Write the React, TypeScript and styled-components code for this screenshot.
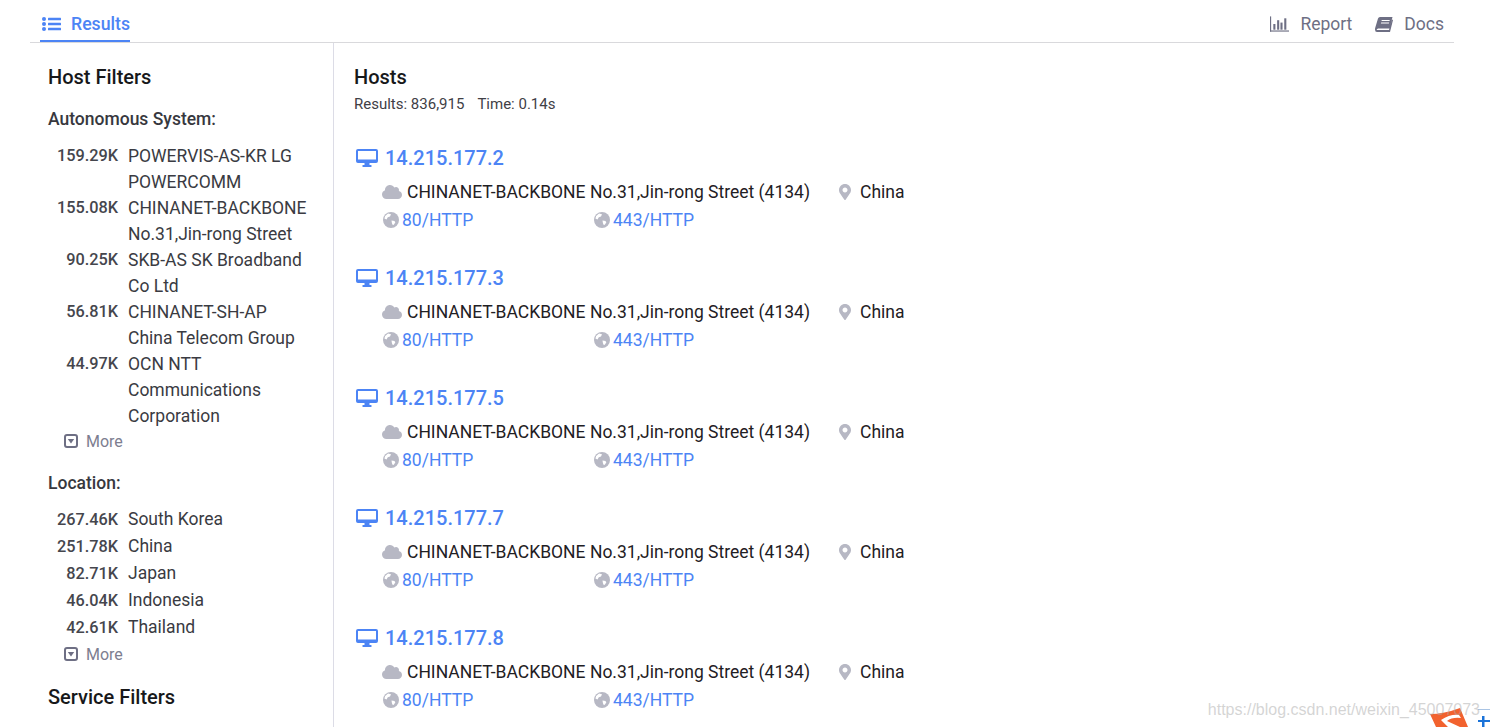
import React from "react";
import styled, { createGlobalStyle } from "styled-components";
import { FaCloud, FaMapMarkerAlt } from "react-icons/fa";

const GlobalStyle = createGlobalStyle`
  html, body {
    margin: 0;
    padding: 0;
    height: 100%;
    overflow: hidden;
    background: #fff;
    font-family: Roboto, "Liberation Sans", sans-serif;
    color: #1b1c1d;
  }
`;

const Page = styled.div`
  height: 727px;
  padding: 0 36px 0 30px;
  position: relative;
  overflow: hidden;
`;

const Nav = styled.nav`
  height: 42px;
  display: flex;
  justify-content: space-between;
  border-bottom: 1px solid #d9d9dc;
  box-sizing: content-box;
`;

const ActiveTab = styled.a`
  display: flex;
  align-items: center;
  gap: 10px;
  height: 42px;
  margin-left: 10px;
  padding: 7px 0 0 2px;
  box-sizing: border-box;
  border-bottom: 2px solid #4c84f5;
  color: #4c84f5;
  font-size: 17.7px;
  font-weight: 500;
`;

const NavRight = styled.div`
  display: flex;
  gap: 23px;
  padding-right: 10px;
`;

const NavLink = styled.a`
  display: flex;
  align-items: center;
  gap: 11px;
  height: 48px;
  font-size: 17.5px;
  color: #6e6f84;
`;

const Body = styled.div`
  display: flex;
  height: 685px;
`;

const Sidebar = styled.aside`
  width: 303px;
  flex: none;
  box-sizing: content-box;
  border-right: 1px solid #dcdce6;
`;

const SideInner = styled.div`
  padding: 22px 18px 0;
`;

const SideTitle = styled.h3`
  margin: 0;
  font-size: 20px;
  line-height: 24px;
  font-weight: 500;
  color: #17181a;
`;

const FilterLabel = styled.h4`
  margin: 19px 0 13px;
  font-size: 17.5px;
  line-height: 22px;
  font-weight: 500;
  color: #37383e;
`;

const FilterList = styled.div<{ $top: number; $bottom: number }>`
  margin-top: ${(p) => p.$top}px;
  margin-bottom: ${(p) => p.$bottom}px;
`;

const FilterRow = styled.div<{ $lh: number }>`
  display: flex;
  font-size: 17.5px;
  line-height: ${(p) => p.$lh}px;
  color: #3a3b42;
`;

const Count = styled.span`
  width: 70px;
  flex: none;
  text-align: right;
  font-size: 16.3px;
  font-weight: 500;
  color: #45464d;
`;

const FilterName = styled.span`
  margin-left: 10px;
  flex: 1;
`;

const More = styled.div`
  display: flex;
  align-items: center;
  gap: 8px;
  height: 26px;
  margin: 0 0 -1px 16px;
  font-size: 16px;
  color: #7d7e90;
`;

const ServiceTitle = styled(SideTitle)`
  margin-top: 19px;
`;

const Main = styled.main`
  flex: 1;
  padding: 22px 20px 0;
`;

const HostsTitle = styled.h3`
  margin: 0;
  font-size: 20px;
  line-height: 24px;
  font-weight: 500;
  color: #17181a;
`;

const Stats = styled.div`
  display: flex;
  gap: 13px;
  margin-top: 5px;
  margin-bottom: 28px;
  font-size: 15px;
  line-height: 20px;
  color: #3f4046;
`;

const HostItem = styled.section`
  height: 120px;
`;

const HostHead = styled.a`
  display: flex;
  align-items: center;
  gap: 7px;
  height: 30px;
  padding: 2px 0 0 2px;
  box-sizing: border-box;
  font-size: 20px;
  font-weight: 500;
  color: #4c84f5;
`;

const HostMeta = styled.div`
  display: flex;
  align-items: center;
  height: 28px;
  margin-top: 6px;
  padding-left: 28px;
  font-size: 17.5px;
  color: #1f2024;
  svg {
    color: #b7b8c4;
  }
`;

const Org = styled.span`
  margin-left: 5px;
  width: 430px;
`;

const Country = styled.span`
  margin-left: 7px;
`;

const Ports = styled.div`
  display: grid;
  grid-template-columns: 211px 200px;
  height: 28px;
  padding-left: 29px;
`;

const Port = styled.a`
  display: flex;
  align-items: center;
  gap: 3px;
  font-size: 17.5px;
  color: #4c84f5;
`;

const Watermark = styled.div`
  position: absolute;
  right: 10px;
  bottom: 8px;
  font-family: "Liberation Sans", sans-serif;
  font-size: 16px;
  color: rgba(170, 170, 170, 0.5);
  z-index: 2;
`;

const CornerLogo = styled.svg`
  position: absolute;
  right: 0;
  bottom: 0;
`;

const ListIcon = () => (
  <svg width="19" height="14" viewBox="0 0 19 14" fill="#4c84f5">
    <circle cx="2" cy="2" r="2" />
    <circle cx="2" cy="7" r="2" />
    <circle cx="2" cy="12" r="2" />
    <rect x="6" y="0.7" width="13" height="2.6" rx="0.5" />
    <rect x="6" y="5.7" width="13" height="2.6" rx="0.5" />
    <rect x="6" y="10.7" width="13" height="2.6" rx="0.5" />
  </svg>
);

const ChartIcon = () => (
  <svg width="19" height="16" viewBox="0 0 20 16" fill="#6e6f84">
    <rect x="0" y="0" width="1.2" height="16" />
    <rect x="0" y="14.8" width="20" height="1.2" />
    <rect x="3.5" y="8" width="2.2" height="6" />
    <rect x="7.5" y="4" width="2.2" height="10" />
    <rect x="11" y="6.5" width="2.2" height="7.5" />
    <rect x="15" y="2" width="2.2" height="12" />
  </svg>
);

const BookIcon = () => (
  <svg width="18" height="15" viewBox="0 0 18 15">
    <path d="M5 0 H17.5 L14.5 11.5 H3.2 Q1.8 11.5 1.6 13 H14 L17 2.5 L18 3 L15 15 H2 Q0 15 0 12.5 Q0 11.5 0.3 10.5 L3 1.5 Q3.5 0 5 0 Z" fill="#6e6f84" />
    <rect x="6.5" y="3" width="8" height="1.1" fill="#fff" transform="skewX(-14) translate(1 0)" />
    <rect x="6" y="5.4" width="8" height="1.1" fill="#fff" transform="skewX(-14) translate(1.5 0)" />
  </svg>
);

const MoreIcon = () => (
  <svg width="14" height="14" viewBox="0 0 14 14">
    <rect x="1" y="1" width="12" height="12" rx="2" fill="#fff" stroke="#6e6f84" strokeWidth="2" />
    <path d="M3.8 5 H10.2 L7 9.5 Z" fill="#6e6f84" />
  </svg>
);

const DesktopIcon = () => (
  <svg width="22" height="18" viewBox="0 0 22 18" fill="#4c84f5">
    <path
      fillRule="evenodd"
      d="M2 0 H20 Q22 0 22 2 V12 Q22 14 20 14 H2 Q0 14 0 12 V2 Q0 0 2 0 Z M2 2 V10.5 H20 V2 Z"
    />
    <rect x="8.5" y="14" width="5" height="2.5" />
    <rect x="6.5" y="16" width="9" height="2" rx="0.6" />
  </svg>
);

const GlobeIcon = () => (
  <svg width="16" height="16" viewBox="0 0 16 16">
    <circle cx="8" cy="8" r="8" fill="#b7b8c4" />
    <path d="M5 1.5 L8 2.2 L7 4.5 L4.8 5.3 L3.5 7.5 L1.4 6.6 Q2 3.2 5 1.5 Z" fill="#fff" />
    <path d="M8.5 8.5 L11.5 9 L12.3 10.5 L10.5 13 L9.3 12.4 L8.8 10.5 Z" fill="#fff" />
  </svg>
);

const asFilters = [
  { count: "159.29K", name: "POWERVIS-AS-KR LG POWERCOMM" },
  { count: "155.08K", name: "CHINANET-BACKBONE No.31,Jin-rong Street" },
  { count: "90.25K", name: "SKB-AS SK Broadband Co Ltd" },
  { count: "56.81K", name: "CHINANET-SH-AP China Telecom Group" },
  { count: "44.97K", name: "OCN NTT Communications Corporation" },
];

const locationFilters = [
  { count: "267.46K", name: "South Korea" },
  { count: "251.78K", name: "China" },
  { count: "82.71K", name: "Japan" },
  { count: "46.04K", name: "Indonesia" },
  { count: "42.61K", name: "Thailand" },
];

const hosts = ["14.215.177.2", "14.215.177.3", "14.215.177.5", "14.215.177.7", "14.215.177.8"];

const App: React.FC = () => {
  return (
    <>
      <GlobalStyle />
      <Page>
        <Nav>
          <ActiveTab>
            <ListIcon />
            Results
          </ActiveTab>
          <NavRight>
            <NavLink>
              <ChartIcon />
              Report
            </NavLink>
            <NavLink>
              <BookIcon />
              Docs
            </NavLink>
          </NavRight>
        </Nav>
        <Body>
          <Sidebar>
            <SideInner>
              <SideTitle>Host Filters</SideTitle>
              <FilterLabel>Autonomous System:</FilterLabel>
              <FilterList $top={0} $bottom={-1}>
                {asFilters.map((f) => (
                  <FilterRow key={f.count} $lh={26}>
                    <Count>{f.count}</Count>
                    <FilterName>{f.name}</FilterName>
                  </FilterRow>
                ))}
              </FilterList>
              <More>
                <MoreIcon />
                More
              </More>
              <FilterLabel>Location:</FilterLabel>
              <FilterList $top={-1} $bottom={0}>
                {locationFilters.map((f) => (
                  <FilterRow key={f.count} $lh={27}>
                    <Count>{f.count}</Count>
                    <FilterName>{f.name}</FilterName>
                  </FilterRow>
                ))}
              </FilterList>
              <More>
                <MoreIcon />
                More
              </More>
              <ServiceTitle>Service Filters</ServiceTitle>
            </SideInner>
          </Sidebar>
          <Main>
            <HostsTitle>Hosts</HostsTitle>
            <Stats>
              <span>Results: 836,915</span>
              <span>Time: 0.14s</span>
            </Stats>
            {hosts.map((ip) => (
              <HostItem key={ip}>
                <HostHead>
                  <DesktopIcon />
                  {ip}
                </HostHead>
                <HostMeta>
                  <FaCloud size={20} />
                  <Org>CHINANET-BACKBONE No.31,Jin-rong Street (4134)</Org>
                  <FaMapMarkerAlt size={16} />
                  <Country>China</Country>
                </HostMeta>
                <Ports>
                  <Port>
                    <GlobeIcon />
                    80/HTTP
                  </Port>
                  <Port>
                    <GlobeIcon />
                    443/HTTP
                  </Port>
                </Ports>
              </HostItem>
            ))}
          </Main>
        </Body>
        <CornerLogo width="62" height="20" viewBox="0 0 62 20">
          <path d="M2 7 Q16 7 32 1 L40 20 L8 20 Z" fill="#f2622e" />
          <path d="M13 13 Q22 7 31 8 L33 11 Q24 10 19 14 L32 20 L20 20 Z" fill="#fff" />
          <rect x="50" y="13" width="12" height="2" fill="#1a73d9" />
          <rect x="54" y="9" width="2.5" height="11" fill="#1a73d9" />
          <rect x="50" y="2" width="12" height="1" fill="#a9c4e4" />
        </CornerLogo>
        <Watermark>https://blog.csdn.net/weixin_45007073</Watermark>
      </Page>
    </>
  );
};

export default App;
